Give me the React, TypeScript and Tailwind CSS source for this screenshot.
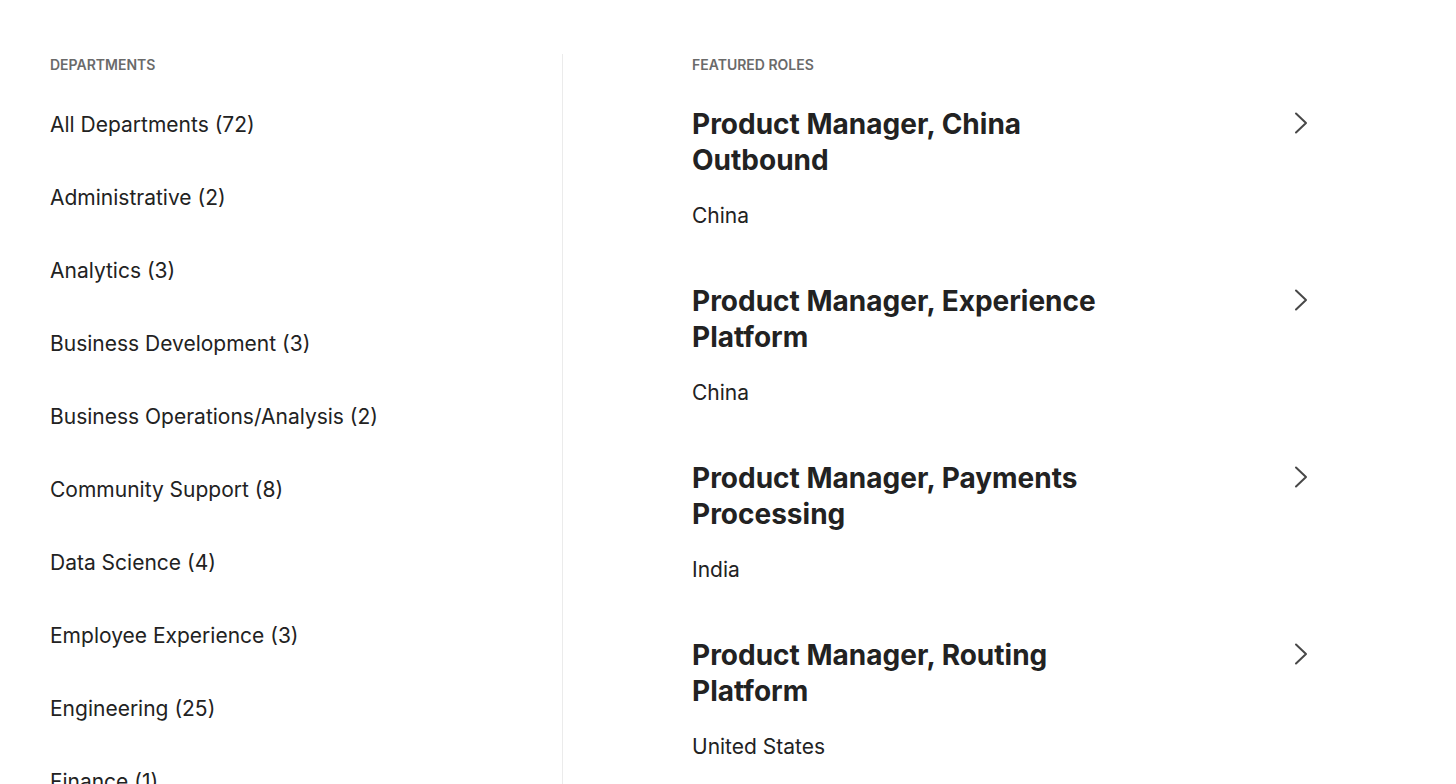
const departments = [
  'All Departments (72)',
  'Administrative (2)',
  'Analytics (3)',
  'Business Development (3)',
  'Business Operations/Analysis (2)',
  'Community Support (8)',
  'Data Science (4)',
  'Employee Experience (3)',
  'Engineering (25)',
  'Finance (1)',
];

const roles = [
  { title: 'Product Manager, China Outbound', location: 'China' },
  { title: 'Product Manager, Experience Platform', location: 'China' },
  { title: 'Product Manager, Payments Processing', location: 'India' },
  { title: 'Product Manager, Routing Platform', location: 'United States' },
];

function Chevron() {
  return (
    <svg width="14" height="22" viewBox="0 0 14 22" fill="none" className="mt-[6px] mr-[2px] shrink-0">
      <path d="M2 1.5 L12 11 L2 20.5" stroke="#484848" strokeWidth="2" strokeLinecap="round" strokeLinejoin="round" />
    </svg>
  );
}

export default function App() {
  return (
    <div
      className="h-[784px] overflow-hidden bg-white text-[#222222]"
      style={{ fontFamily: 'Inter, "Noto Sans", sans-serif' }}
    >
      <div className="flex pt-[54px] h-full">
        <div className="w-[563px] shrink-0 pl-[50px] border-r border-[#ebebeb]">
          <h2 className="text-[14px] font-semibold uppercase text-[#6a6a6a] leading-[22px]">Departments</h2>
          <ul className="mt-[35px] flex flex-col gap-[45px]">
            {departments.map((d) => (
              <li key={d} className="text-[21px] leading-[28px]">
                {d}
              </li>
            ))}
          </ul>
        </div>

        <div className="flex-1 pl-[129px]">
          <h2 className="text-[14px] font-semibold uppercase text-[#6a6a6a] leading-[22px]">Featured Roles</h2>
          <ul className="mt-[30px] flex flex-col gap-[53px] w-[618px]">
            {roles.map((r) => (
              <li key={r.title} className="flex items-start justify-between">
                <div>
                  <h3 className="max-w-[440px] text-[28px] font-bold leading-[36px]">{r.title}</h3>
                  <p className="mt-[24px] text-[21px] leading-[28px]">{r.location}</p>
                </div>
                <Chevron />
              </li>
            ))}
          </ul>
        </div>
      </div>
    </div>
  );
}
